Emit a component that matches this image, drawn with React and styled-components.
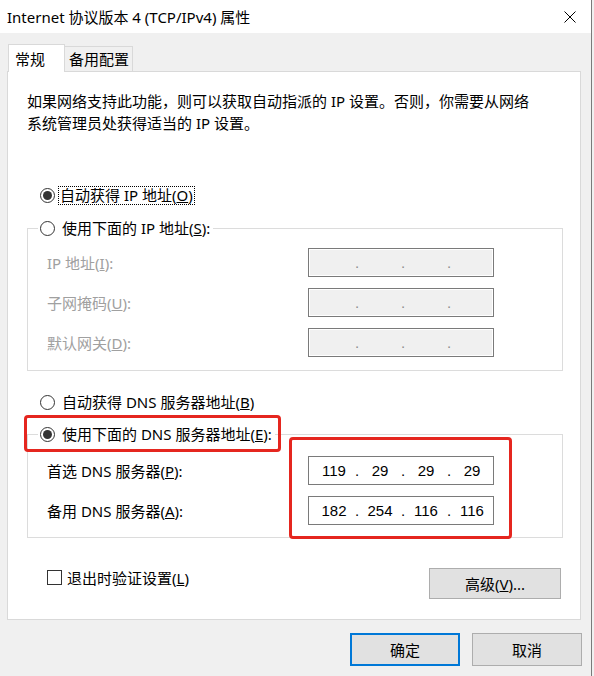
import React from "react";
import styled, { createGlobalStyle } from "styled-components";

const GlobalStyle = createGlobalStyle`
  html, body {
    margin: 0;
    padding: 0;
    background: #f0f0f0;
  }
  body {
    font-family: "Noto Sans", "Noto Sans CJK SC", sans-serif;
    font-size: 15px;
    color: #000;
  }
  * {
    box-sizing: border-box;
  }
`;

const Window = styled.div`
  position: relative;
  width: 592px;
  height: 676px;
  background: #f0f0f0;
  border-right: 1px solid #7a7a7a;
`;

const TitleBar = styled.div`
  height: 33px;
  background: #fff;
  display: flex;
  align-items: center;
  justify-content: space-between;
  padding: 0 15px 0 7px;
`;

const Title = styled.div`
  line-height: 20px;
  white-space: nowrap;
`;

const Body = styled.div`
  padding: 11px 10px 0 7px;
`;

const TabRow = styled.div`
  position: relative;
  z-index: 1;
  display: flex;
  align-items: flex-end;
  height: 28px;
  margin-bottom: -1px;
  padding-left: 1px;
`;

const Tab = styled.div`
  display: flex;
  align-items: center;
  width: ${(p) => (p.$active ? 57 : 69)}px;
  height: ${(p) => (p.$active ? 28 : 25)}px;
  margin-bottom: ${(p) => (p.$active ? 0 : 1)}px;
  margin-left: ${(p) => (p.$active ? 0 : -1)}px;
  padding-left: ${(p) => (p.$active ? 6 : 4)}px;
  background: ${(p) => (p.$active ? "#fff" : "#f0f0f0")};
  border: 1px solid #d9d9d9;
  border-bottom: none;
  line-height: 20px;
`;

const Panel = styled.div`
  display: flex;
  flex-direction: column;
  height: 549px;
  background: #fff;
  border: 1px solid #d9d9d9;
  padding-top: 18px;
`;

const Description = styled.p`
  margin: 0 0 0 19px;
  line-height: 22px;
  white-space: nowrap;
`;

const RadioRow = styled.div`
  display: flex;
  align-items: center;
  gap: 6px;
  height: 22px;
  margin: ${(p) => p.$top || 0}px 0 0 ${(p) => (p.$inLegend ? 0 : 32)}px;
  white-space: nowrap;
`;

const RadioMark = styled.span`
  position: relative;
  width: 15px;
  height: 15px;
  flex-shrink: 0;
  border: 1px solid #333;
  border-radius: 50%;
  background: #fff;

  &::after {
    content: "";
    display: ${(p) => (p.$checked ? "block" : "none")};
    position: absolute;
    left: 2px;
    top: 2px;
    width: 9px;
    height: 9px;
    border-radius: 50%;
    background: #333;
  }
`;

const RadioText = styled.span`
  line-height: 17px;
  padding: 0 1px;
  margin-left: ${(p) => (p.$focused ? -2 : 0)}px;
  outline: ${(p) => (p.$focused ? "1px dotted #000" : "none")};
`;

const Group = styled.fieldset`
  width: 536px;
  min-width: 0;
  margin: ${(p) => p.$top}px 0 0 19px;
  padding: ${(p) => p.$pt}px 0 ${(p) => p.$pb}px 0;
  border: 1px solid #dcdcdc;
`;

const Legend = styled.legend`
  margin-left: 10px;
  padding: 0 2px;
`;

const FieldList = styled.div`
  display: flex;
  flex-direction: column;
  gap: 11px;
`;

const FieldRow = styled.div`
  display: grid;
  grid-template-columns: 261px 186px;
  align-items: center;
  height: 29px;
  padding-left: 19px;
`;

const FieldLabel = styled.span`
  color: ${(p) => (p.$disabled ? "#a0a0a0" : "#000")};
  white-space: nowrap;
`;

const IpBox = styled.div`
  display: flex;
  align-items: center;
  width: 186px;
  height: 29px;
  padding-left: 8px;
  border: 1px solid #7a7a7a;
  background: ${(p) => (p.$disabled ? "#f0f0f0" : "#fff")};
  box-shadow: ${(p) => (p.$disabled ? "inset 0 0 0 1px #fff" : "none")};
  font-family: "Liberation Sans", Arial, sans-serif;
  font-size: 15px;
  color: ${(p) => (p.$disabled ? "#8d8d8d" : "#000")};
`;

const IpCell = styled.span`
  width: 34px;
  text-align: center;
`;

const IpDot = styled.span`
  width: 12px;
  text-align: center;
`;

const BottomRow = styled.div`
  display: flex;
  justify-content: space-between;
  align-items: flex-start;
  margin-top: 30px;
  padding: 0 19px 0 39px;
`;

const CheckLabel = styled.div`
  display: flex;
  align-items: center;
  gap: 5px;
  height: 17px;
  margin-top: 1px;
  white-space: nowrap;
`;

const CheckBox = styled.span`
  width: 15px;
  height: 15px;
  flex-shrink: 0;
  border: 1px solid #333;
  background: #fff;
`;

const Button = styled.div`
  display: flex;
  align-items: center;
  justify-content: center;
  width: ${(p) => p.$w}px;
  height: ${(p) => p.$h}px;
  background: #e1e1e1;
  border: ${(p) => (p.$default ? "2px solid #0078d7" : "1px solid #adadad")};
  white-space: nowrap;
`;

const Footer = styled.div`
  display: flex;
  justify-content: flex-end;
  gap: 12px;
  margin: 13px -1px 0 0;
`;

const Annotation = styled.div`
  position: absolute;
  left: ${(p) => p.$x}px;
  top: ${(p) => p.$y}px;
  width: ${(p) => p.$w}px;
  height: ${(p) => p.$h}px;
  border: 3px solid #e5261f;
  border-radius: 4px;
  pointer-events: none;
`;

const CloseIcon = () => (
  <svg width="12" height="12" viewBox="0 0 12 12">
    <path d="M0.5 0.5 L11.5 11.5 M11.5 0.5 L0.5 11.5" stroke="#000" strokeWidth="1" fill="none" />
  </svg>
);

const Radio = ({ checked, focused, inLegend, top, children }) => (
  <RadioRow $inLegend={inLegend} $top={top}>
    <RadioMark $checked={checked} />
    <RadioText $focused={focused}>{children}</RadioText>
  </RadioRow>
);

const IpField = ({ values, disabled }) => (
  <IpBox $disabled={disabled}>
    {values.map((v, i) => (
      <React.Fragment key={i}>
        {i > 0 && <IpDot>.</IpDot>}
        <IpCell>{v}</IpCell>
      </React.Fragment>
    ))}
  </IpBox>
);

const empty = ["", "", "", ""];

const App = () => {
  return (
    <Window>
      <GlobalStyle />
      <TitleBar>
        <Title>Internet 协议版本 4 (TCP/IPv4) 属性</Title>
        <CloseIcon />
      </TitleBar>
      <Body>
        <TabRow>
          <Tab $active>常规</Tab>
          <Tab>备用配置</Tab>
        </TabRow>
        <Panel>
          <Description>
            如果网络支持此功能，则可以获取自动指派的 IP 设置。否则，你需要从网络
            <br />
            系统管理员处获得适当的 IP 设置。
          </Description>

          <Radio checked focused top={50}>
            自动获得 IP 地址(<u>O</u>)
          </Radio>

          <Group $top={11} $pt={9} $pb={13}>
            <Legend>
              <Radio inLegend>
                使用下面的 IP 地址(<u>S</u>):
              </Radio>
            </Legend>
            <FieldList>
              <FieldRow>
                <FieldLabel $disabled>IP 地址(<u>I</u>):</FieldLabel>
                <IpField values={empty} disabled />
              </FieldRow>
              <FieldRow>
                <FieldLabel $disabled>子网掩码(<u>U</u>):</FieldLabel>
                <IpField values={empty} disabled />
              </FieldRow>
              <FieldRow>
                <FieldLabel $disabled>默认网关(<u>D</u>):</FieldLabel>
                <IpField values={empty} disabled />
              </FieldRow>
            </FieldList>
          </Group>

          <Radio top={20}>
            自动获得 DNS 服务器地址(<u>B</u>)
          </Radio>

          <Group $top={10} $pt={11} $pb={12}>
            <Legend>
              <Radio checked inLegend>
                使用下面的 DNS 服务器地址(<u>E</u>):
              </Radio>
            </Legend>
            <FieldList>
              <FieldRow>
                <FieldLabel>首选 DNS 服务器(<u>P</u>):</FieldLabel>
                <IpField values={["119", "29", "29", "29"]} />
              </FieldRow>
              <FieldRow>
                <FieldLabel>备用 DNS 服务器(<u>A</u>):</FieldLabel>
                <IpField values={["182", "254", "116", "116"]} />
              </FieldRow>
            </FieldList>
          </Group>

          <BottomRow>
            <CheckLabel>
              <CheckBox />
              <span>
                退出时验证设置(<u>L</u>)
              </span>
            </CheckLabel>
            <Button $w={132} $h={31}>
              高级(<u>V</u>)...
            </Button>
          </BottomRow>
        </Panel>
        <Footer>
          <Button $w={110} $h={33} $default>
            确定
          </Button>
          <Button $w={110} $h={33}>
            取消
          </Button>
        </Footer>
      </Body>

      <Annotation $x={24} $y={415} $w={257} $h={37} />
      <Annotation $x={289} $y={437} $w={223} $h={102} />
    </Window>
  );
};

export default App;
